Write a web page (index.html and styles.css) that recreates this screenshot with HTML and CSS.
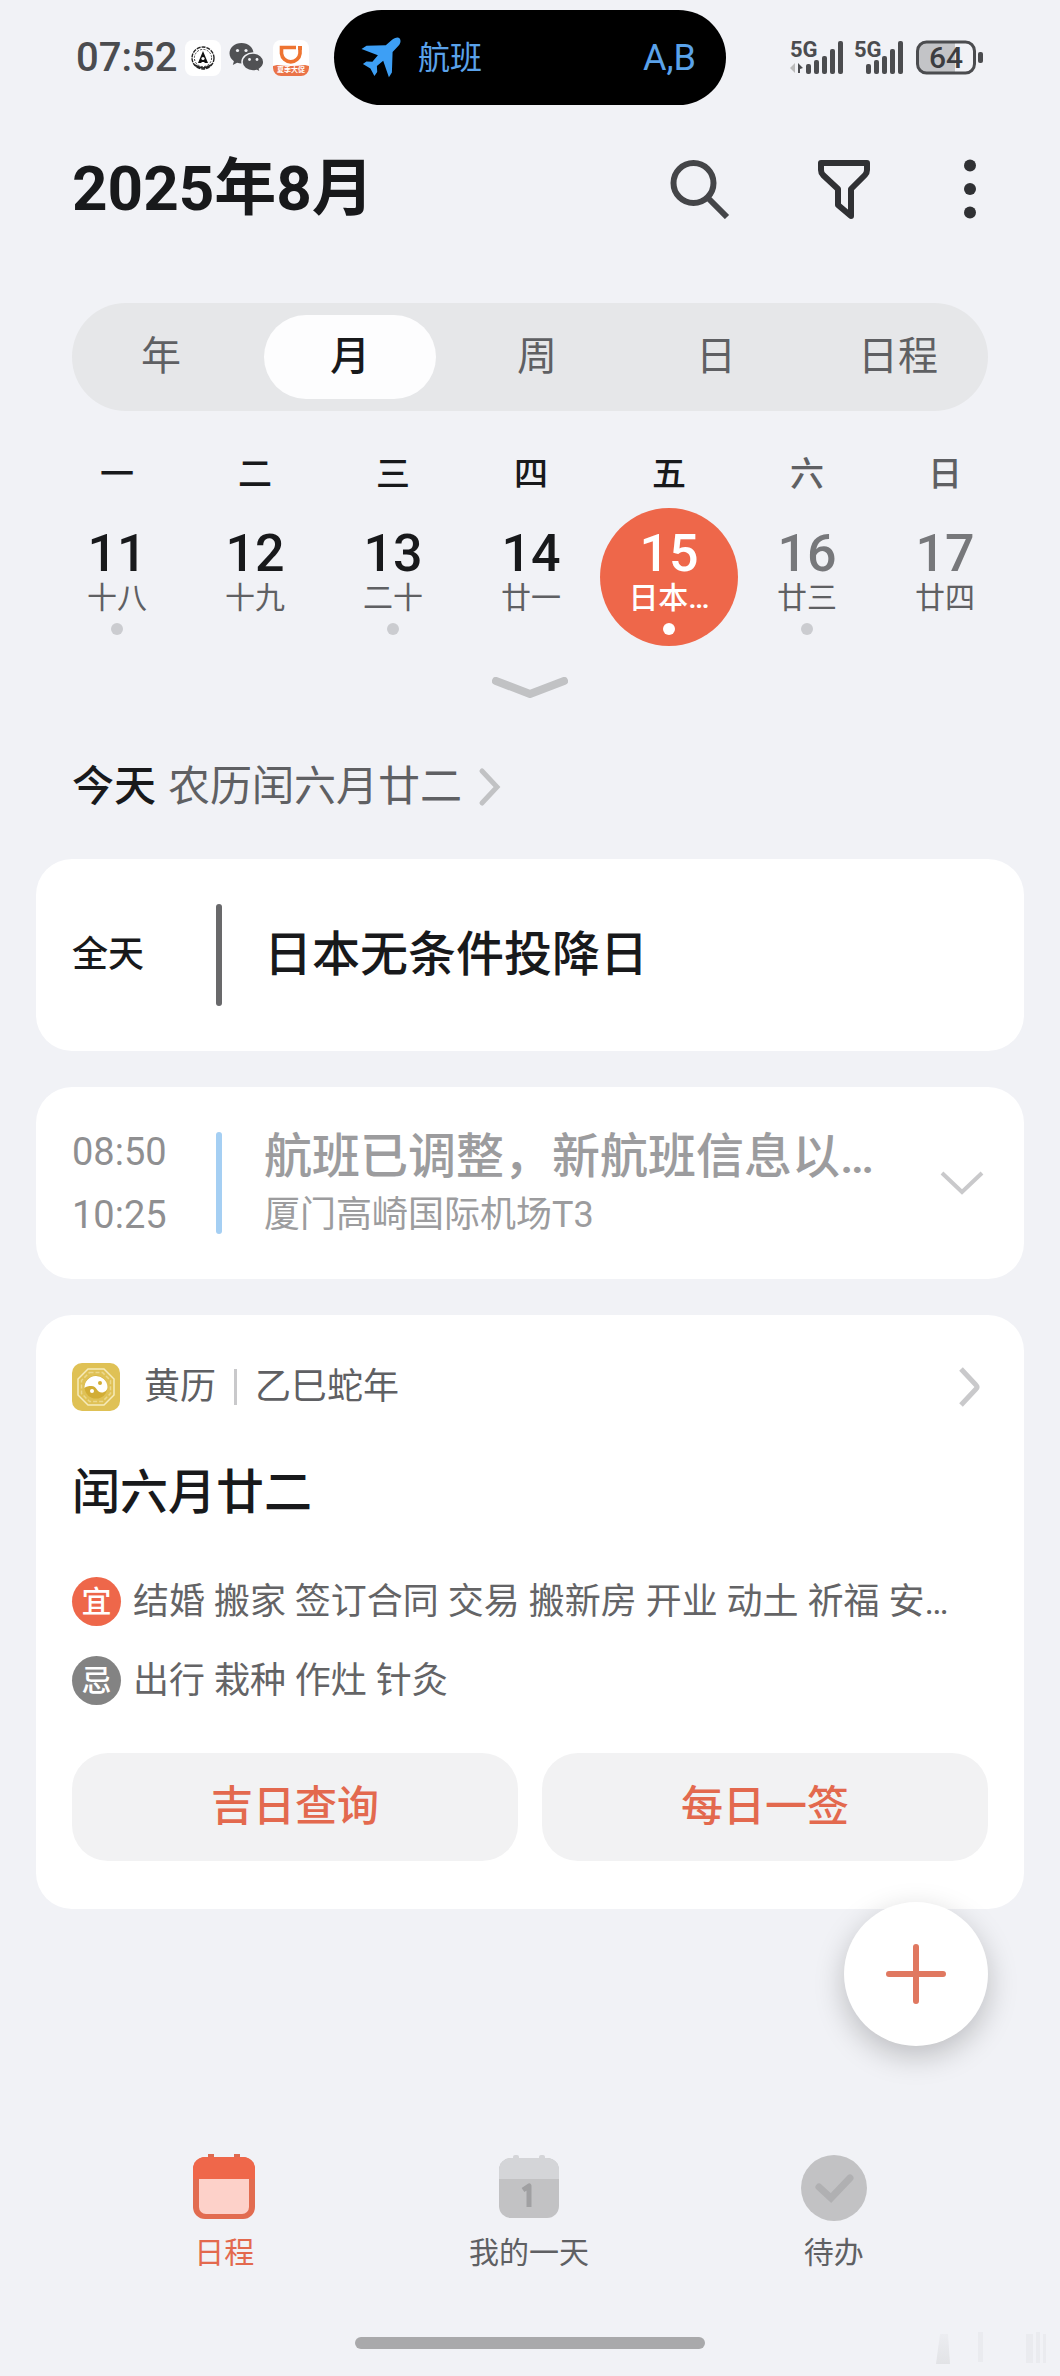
FILE: index.html
```html
<!DOCTYPE html>
<html lang="zh-CN">
<head>
<meta charset="utf-8">
<meta name="viewport" content="width=device-width, initial-scale=1">
<title>日历</title>
<link rel="stylesheet" href="styles.css">
</head>
<body>
<div class="app">
  <div class="status">
    <div class="status-left">
      <span class="clock">07:52</span>
      <svg width="36" height="36" viewBox="0 0 36 36" aria-hidden="true">
        <rect width="36" height="36" rx="8" fill="#fff"/>
        <circle cx="18" cy="18" r="11" fill="none" stroke="#222" stroke-width="1.4" stroke-dasharray="4 1"/>
        <circle cx="18" cy="18" r="8.6" fill="none" stroke="#444" stroke-width="1" stroke-dasharray="2 1.4"/>
        <path d="M18 11l5 12h-3l-1-1h-2l-1 1h-3z" fill="#111"/>
        <circle cx="18" cy="18.5" r="1.6" fill="#fff"/>
        <path d="M10 25q8 6 16 0" fill="none" stroke="#222" stroke-width="1.6"/>
      </svg>
      <svg width="36" height="36" viewBox="0 0 36 36" aria-hidden="true">
        <path d="M12.500 3C5.700 3 .5 7.700.5 13.300c0 3.200 1.700 6 4.400 7.900L3.800 25l4.300-2.200c1.400.4 2.900.6 4.400.6 6.800 0 12-4.500 12-10.100S19.300 3 12.500 3z" fill="#505154"/>
        <circle cx="8.500" cy="10.500" r="1.600" fill="#f1f2f6"/><circle cx="17" cy="10.500" r="1.600" fill="#f1f2f6"/>
        <path d="M24 13c-6 0-11 4-11 9s5 9 11 9c1.400 0 2.600-.2 3.800-.5l3.700 2-1-3.400c2.600-1.700 4.300-4.200 4.300-7.100 0-5-4.800-9-10.800-9z" fill="#505154" stroke="#f1f2f6" stroke-width="1.500"/>
        <circle cx="20.500" cy="19.500" r="1.400" fill="#f1f2f6"/><circle cx="28" cy="19.500" r="1.400" fill="#f1f2f6"/>
      </svg>
      <svg width="36" height="36" viewBox="0 0 36 36" aria-hidden="true">
        <rect width="36" height="36" rx="8" fill="#fff"/>
        <path d="M8.500 7.500h18.500v6a9.300 9.300 0 0 1-18.500 0z" fill="none" stroke="#ee7431" stroke-width="3.600"/>
        <path d="M23 4.500h6.500V10H23z" fill="#fff"/><path d="M25 6h4v4h-4z" fill="#ee7431"/>
        <path d="M0 26l4-1q14 2 28 0l4 1v2a8 8 0 0 1-8 8H8a8 8 0 0 1-8-8z" fill="#ea7348"/>
        <text x="18" y="32" text-anchor="middle" class="tiny">夏季大促</text>
      </svg>
    </div>
    <div class="island">
      <svg width="42" height="42" viewBox="0 0 42 42" aria-hidden="true">
        <path d="M39.500 1.200c1.600 1.500 1.300 5-.8 7.400L32.600 15l-.7 20.500-3 4.800-5.700-16.500-6.300 5.200.3 6-2.800 4-4-7.500-7.500-4.500 3.500-2.500 6 .3 5.500-6.500L1.500 12l5-3.200 19.300-.6 6-5.200c2.400-2 6-3.200 7.700-1.800z" fill="#3d9ff5"/>
      </svg>
      <span class="island-title">航班</span>
      <span class="island-gate">A,B</span>
    </div>
    <div class="status-right">
      <svg class="signal" width="114" height="36" viewBox="0 0 114 36" fill="#4b4c4f" aria-hidden="true">
        <text x="0" y="17" class="net">5G</text>
        <path d="M5 23v10l-5-5z" fill="#bbb"/><path d="M8 23l5 5-3 1v4H8z"/>
        <rect x="16" y="24" width="5" height="10" rx="2"/><rect x="24" y="20" width="5" height="14" rx="2"/><rect x="32" y="16" width="5" height="18" rx="2"/><rect x="40" y="9" width="5" height="25" rx="2"/><rect x="48" y="1" width="5" height="33" rx="2"/>
        <text x="64" y="17" class="net">5G</text>
        <rect x="76" y="24" width="5" height="10" rx="2"/><rect x="84" y="20" width="5" height="14" rx="2"/><rect x="92" y="16" width="5" height="18" rx="2"/><rect x="100" y="9" width="5" height="25" rx="2"/><rect x="108" y="1" width="5" height="33" rx="2"/>
      </svg>
      <svg width="68" height="36" viewBox="0 0 68 36" aria-hidden="true">
        <path d="M10 2h29v31H10a8 8 0 0 1-8-8V10a8 8 0 0 1 8-8z" fill="#c3c4c7"/>
        <rect x="1.500" y="2" width="57" height="31" rx="9" fill="none" stroke="#4b4c4f" stroke-width="3"/>
        <rect x="62" y="12" width="5" height="11" rx="2" fill="#4b4c4f"/>
        <text x="30" y="28" text-anchor="middle" class="battery">64</text>
      </svg>
    </div>
  </div>

  <header class="header">
    <h1>2025年8月</h1>
    <div class="actions">
      <button aria-label="搜索"><svg width="60" height="60" viewBox="0 0 60 60" fill="none" stroke="#444548" stroke-width="6"><circle cx="23.500" cy="24" r="20"/><path d="M38 39l19 19"/></svg></button>
      <button aria-label="筛选"><svg width="60" height="60" viewBox="0 0 60 60" fill="none" stroke="#303134" stroke-width="6" stroke-linejoin="round"><path d="M7 4h46v7q0 3-2 5L37 30v27L24 46V30L9 16q-2-2-2-5z"/></svg></button>
      <button aria-label="更多"><svg width="36" height="60" viewBox="0 0 36 60" fill="#303134"><circle cx="18" cy="6.500" r="6"/><circle cx="18" cy="30" r="6"/><circle cx="18" cy="53.500" r="6"/></svg></button>
    </div>
  </header>

  <div class="segments" role="tablist">
    <button role="tab">年</button>
    <button role="tab" class="selected" aria-selected="true">月</button>
    <button role="tab">周</button>
    <button role="tab">日</button>
    <button role="tab">日程</button>
  </div>

  <section class="week">
    <span class="weekday">一</span><span class="weekday">二</span><span class="weekday">三</span><span class="weekday">四</span><span class="weekday">五</span><span class="weekday weekend">六</span><span class="weekday weekend">日</span>
    <button class="day has-event"><b>11</b><span>十八</span></button>
    <button class="day"><b>12</b><span>十九</span></button>
    <button class="day has-event"><b>13</b><span>二十</span></button>
    <button class="day"><b>14</b><span>廿一</span></button>
    <button class="day has-event today"><b>15</b><span>日本…</span></button>
    <button class="day has-event off"><b>16</b><span>廿三</span></button>
    <button class="day off"><b>17</b><span>廿四</span></button>
  </section>
  <button class="expand" aria-label="展开"><svg width="76" height="22" viewBox="0 0 76 22" fill="none" stroke="#c1c2c4" stroke-width="8" stroke-linecap="round" stroke-linejoin="round"><path d="M4 4l34 13L72 4"/></svg></button>

  <a class="lunar" href="#almanac">
    <strong>今天</strong><span>农历闰六月廿二</span>
    <svg width="24" height="40" viewBox="0 0 24 40" fill="none" stroke="#c1c2c4" stroke-width="5" stroke-linecap="round"><path d="M4 4l15 16L4 36"/></svg>
  </a>

  <main class="cards">
    <article class="card event">
      <div class="times strong">全天</div>
      <i class="bar"></i>
      <div class="body"><h2>日本无条件投降日</h2></div>
    </article>
    <article class="card event past">
      <div class="times"><time>08:50</time><time>10:25</time></div>
      <i class="bar"></i>
      <div class="body"><h2>航班已调整，新航班信息以…</h2><p>厦门高崎国际机场T3</p></div>
      <button class="more" aria-label="展开"><svg width="44" height="26" viewBox="0 0 44 26" fill="none" stroke="#c9c9cb" stroke-width="4"><path d="M2 3l20 19L42 3"/></svg></button>
    </article>
    <article class="card almanac" id="almanac">
      <a class="almanac-head" href="#almanac">
        <svg width="48" height="48" viewBox="0 0 48 48" aria-hidden="true">
          <rect width="48" height="48" rx="10" fill="#dfc155"/>
          <path d="M16 6h16l10 10v16L32 42H16L6 32V16z" fill="none" stroke="#f6ebbb" stroke-width="1.500"/>
          <path d="M17.500 9.500h13l8 8v13l-8 8h-13l-8-8v-13z" fill="none" stroke="#ecd88c" stroke-width="1.500" stroke-dasharray="4 2"/>
          <circle cx="24" cy="24" r="11.500" fill="#d2ad35"/>
          <path d="M12.500 25a11.500 11.500 0 0 1 23-1c0 3-2.500 5.500-5.700 5.500-5.300 0-4.800-6.500-10.300-6.500-3 0-5.500 .5-7 2z" fill="#fff"/>
          <circle cx="28" cy="20" r="2" fill="#d2ad35"/><circle cx="20" cy="28" r="2" fill="#fff"/>
        </svg>
        <span class="name">黄历</span><span class="year">乙巳蛇年</span>
        <svg class="go" width="24" height="42" viewBox="0 0 24 42" fill="none" stroke="#c9c9cb" stroke-width="5"><path d="M3 3l15 16q2 2 0 4L3 39"/></svg>
      </a>
      <h2>闰六月廿二</h2>
      <div class="advice"><em>宜</em><p>结婚 搬家 签订合同 交易 搬新房 开业 动土 祈福 安…</p></div>
      <div class="advice avoid"><em>忌</em><p>出行 栽种 作灶 针灸</p></div>
      <div class="links"><button>吉日查询</button><button>每日一签</button></div>
    </article>
  </main>

  <button class="fab" aria-label="新建"><svg width="60" height="60" viewBox="0 0 60 60" stroke="#e07860" stroke-width="6" stroke-linecap="round"><path d="M3 30h54M30 3v54"/></svg></button>

  <nav class="tabs">
    <a class="active" href="#schedule">
      <svg width="68" height="68" viewBox="0 0 68 68"><path d="M18 1h6v6h-6zM44 1h6v6h-6z" fill="#dd6a50"/><rect x="3" y="4" width="62" height="62" rx="12" fill="#e26c50"/><path d="M3 26V16A12 12 0 0 1 15 4h38a12 12 0 0 1 12 12v10z" fill="#ef674a"/><path d="M9 26h50v28a7 7 0 0 1-7 7H16a7 7 0 0 1-7-7z" fill="#fdd1c9"/></svg>
      <span>日程</span>
    </a>
    <a href="#myday">
      <svg width="68" height="68" viewBox="0 0 68 68"><rect x="18" y="2" width="6" height="8" rx="2" fill="#d4d5d8"/><rect x="44" y="2" width="6" height="8" rx="2" fill="#d4d5d8"/><rect x="4" y="5" width="60" height="60" rx="12" fill="#c2c2c4"/><path d="M4 26v-9A12 12 0 0 1 16 5h36a12 12 0 0 1 12 12v9z" fill="#d4d5d8"/><path d="M28 37l6-4v21" fill="none" stroke="#a0a0a2" stroke-width="5" stroke-linejoin="round"/></svg>
      <span>我的一天</span>
    </a>
    <a href="#todo">
      <svg width="68" height="68" viewBox="0 0 68 68"><circle cx="34" cy="35" r="33" fill="#c2c2c4"/><path d="M19 34l12 11 19-20" fill="none" stroke="#b0b0b2" stroke-width="7" stroke-linecap="round"/></svg>
      <span>待办</span>
    </a>
  </nav>
  <div class="home"></div>
  <svg class="mark" width="116" height="40" viewBox="0 0 116 40" aria-hidden="true">
    <defs><linearGradient id="fade" x1="0" y1="0" x2="0" y2="1"><stop offset="0" stop-color="#ecedf1"/><stop offset="1" stop-color="#e2e3e6"/></linearGradient></defs>
    <path d="M6 6h8l2 30H2z" fill="url(#fade)"/>
    <path d="M44 4h5v30h-5zM92 6h7v29h-7zM102 4h4v31h-4zM109 6h3v29h-3z" fill="#eaebef"/>
  </svg>
</div>
</body>
</html>
```
FILE: styles.css
```css
* { box-sizing: border-box; }
body {
  margin: 0;
  background: #f1f2f6;
  color: #18191b;
  font-family: Roboto, "Noto Sans CJK SC", sans-serif;
  font-size: 36px;
  line-height: 48px;
}
h1, h2, p { margin: 0; }
h2 { font-size: 48px; line-height: 60px; font-weight: 500; }
button { margin: 0; padding: 0; border: 0; background: none; font: inherit; color: inherit; }
a { color: inherit; text-decoration: none; }
svg { display: block; flex: none; }

.app { position: relative; display: flex; flex-direction: column; min-height: 100vh; }

/* status bar */
.status {
  display: grid;
  grid-template-columns: 1fr 392px 1fr;
  align-items: center;
  padding: 10px 76px;
}
.status-left, .status-right { display: flex; align-items: center; gap: 8px; }
.status-right { justify-content: flex-end; gap: 12px; }
.clock { color: #4b4c4f; font-size: 40px; font-weight: 500; }
.island {
  display: flex;
  align-items: center;
  height: 95px;
  padding: 0 30px 0 26px;
  border-radius: 48px;
  background: #000;
  color: #5aa2ea;
}
.island-title { margin-left: 16px; font-size: 32px; }
.island-gate { margin-left: auto; }
.tiny { font-size: 7px; font-weight: 700; fill: #fff; }
.signal { overflow: visible; }
.net { font-size: 22px; font-weight: 700; }
.battery { font-size: 30px; font-weight: 500; fill: #3c3d40; }

/* title row */
.header { display: flex; align-items: center; justify-content: space-between; height: 148px; padding: 0 72px; }
h1 { font-size: 62px; line-height: 72px; font-weight: 700; }
.actions { display: flex; gap: 84px; }
.actions button:last-child { margin-left: -6px; }

/* view switch */
.segments {
  display: grid;
  grid-template-columns: 178fr 200fr 174fr 184fr 180fr;
  align-items: center;
  justify-items: center;
  height: 108px;
  margin: 40px 72px 0;
  border-radius: 54px;
  background: #e6e7e9;
  color: #5f6063;
  font-size: 40px;
}
.segments .selected { width: 172px; height: 84px; border-radius: 42px; background: #fdfdfe; color: #18191b; font-weight: 500; }

/* week strip */
.week { display: grid; grid-template-columns: repeat(7, 1fr); row-gap: 10px; justify-items: center; padding: 39px 50px 0 48px; }
.weekday { font-size: 34px; font-weight: 500; }
.weekend { color: #5f6063; }
.day {
  display: flex;
  flex-direction: column;
  align-items: center;
  width: 138px;
  height: 138px;
  padding-top: 20px;
  border-radius: 50%;
}
.day b { font-size: 52px; font-weight: 500; line-height: 52px; }
.day span { color: #5f6063; font-size: 30px; line-height: 36px; }
.has-event::after { content: ""; width: 12px; height: 12px; margin-top: 7px; border-radius: 50%; background: #cbccd0; }
.off b { color: #77787b; }
.today { background: #ee674a; color: #fff; }
.today span { color: #fff; font-weight: 500; }
.today::after { background: #fff; }
.expand { align-self: center; margin-top: 31px; }

.lunar { display: flex; align-items: center; margin: 64px 72px 48px; font-size: 42px; }
.lunar strong { font-weight: 500; }
.lunar span { margin: 0 16px 0 12px; color: #5f6063; }

/* cards */
.cards { display: grid; gap: 36px; padding: 0 36px; }
.card { min-width: 0; padding: 36px; border-radius: 36px; background: #fff; }
.event { display: flex; align-items: center; min-height: 192px; }
.times { display: flex; flex-direction: column; gap: 15px; width: 144px; color: #8f8f91; font-size: 38px; }
.times.strong { color: #18191b; font-size: 36px; font-weight: 500; }
.bar { width: 6px; height: 102px; border-radius: 3px; background: #69696b; }
.body { flex: 1; min-width: 0; margin-left: 42px; }
.past .bar { background: #a5cff3; }
.past .body { display: grid; gap: 4px; color: #9c9c9e; }
.more { margin-right: 4px; }

.almanac { padding: 48px 36px; }
.almanac-head { display: flex; align-items: center; color: #5f6063; }
.name { margin-left: 24px; }
.year { display: flex; align-items: center; }
.year::before { content: ""; width: 3px; height: 36px; margin: 0 18px; background: #c9c9cb; }
.go { margin-left: auto; margin-right: 6px; }
.almanac h2 { margin: 52px 0 54px; }
.advice { display: flex; align-items: center; gap: 12px; margin-bottom: 30px; color: #646466; }
.advice em {
  display: grid;
  place-items: center;
  width: 49px;
  height: 49px;
  border-radius: 50%;
  background: #ee674a;
  color: #fff;
  font-size: 30px;
  font-style: normal;
  font-weight: 500;
}
.advice p { min-width: 0; overflow: hidden; text-overflow: ellipsis; white-space: nowrap; }
.avoid em { background: #838383; }
.links { display: grid; grid-template-columns: 1fr 1fr; gap: 24px; margin-top: 48px; }
.links button { height: 108px; border-radius: 36px; background: #f2f2f3; color: #e3694e; font-size: 42px; font-weight: 500; }

.fab {
  position: absolute;
  right: 72px;
  bottom: 330px;
  display: grid;
  place-items: center;
  width: 144px;
  height: 144px;
  border-radius: 50%;
  background: #fff;
  box-shadow: 0 10px 30px rgba(0, 0, 0, .22);
}

/* bottom navigation */
.tabs { display: grid; grid-template-columns: repeat(3, 1fr); margin-top: auto; padding: 40px 74px 0 72px; color: #5f6063; font-size: 30px; line-height: 36px; }
.tabs a { display: flex; flex-direction: column; align-items: center; gap: 14px; }
.tabs .active { color: #e3694e; }
.home { align-self: center; width: 33%; height: 12px; margin: 66px 0 27px; border-radius: 6px; background: #a9a9ab; }
.mark { position: absolute; right: 10px; bottom: 8px; }
```
